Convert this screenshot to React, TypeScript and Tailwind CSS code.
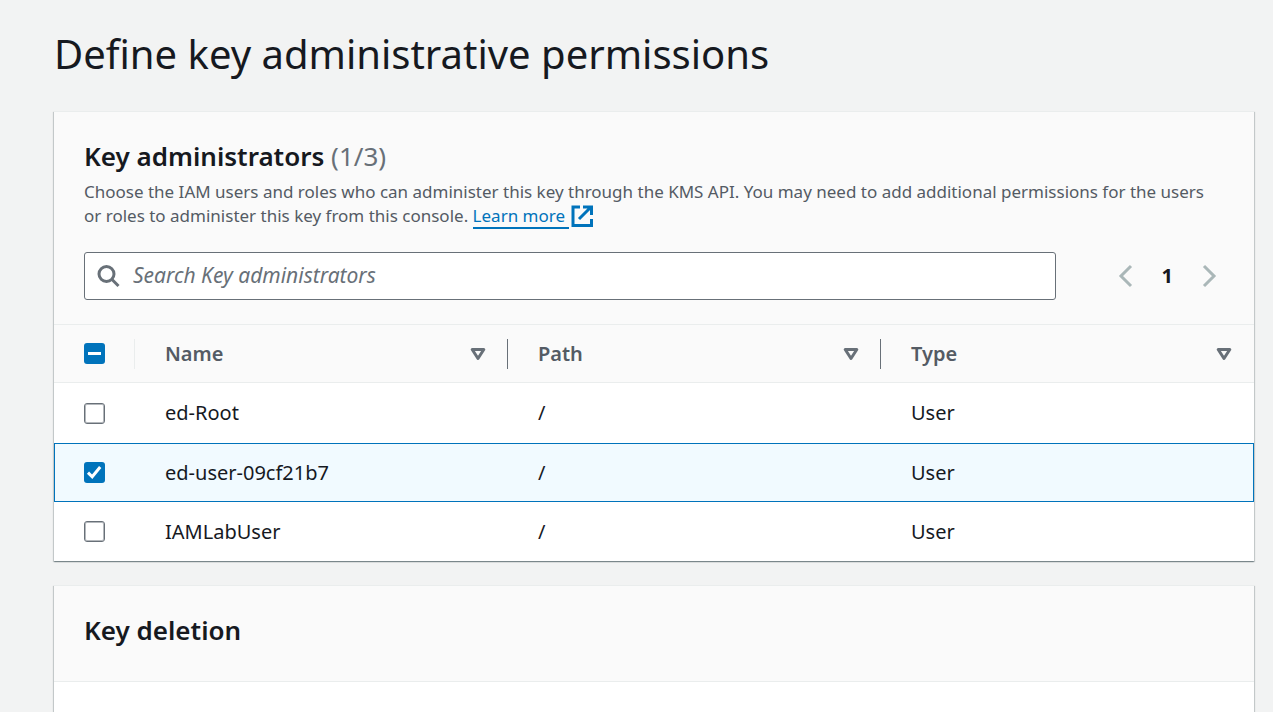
import { useState } from "react";

type Principal = { name: string; path: string; type: string };

const principals: Principal[] = [
  { name: "ed-Root", path: "/", type: "User" },
  { name: "ed-user-09cf21b7", path: "/", type: "User" },
  { name: "IAMLabUser", path: "/", type: "User" },
];

const columns = ["Name", "Path", "Type"];

const cardClass =
  "border-t border-[#eaeded] bg-white shadow-[0_1px_1px_0_rgba(0,28,36,0.3),1px_1px_1px_0_rgba(0,28,36,0.15),-1px_1px_1px_0_rgba(0,28,36,0.15)]";

function Tick({
  label,
  checked,
  partial = false,
  onChange,
}: {
  label: string;
  checked: boolean;
  partial?: boolean;
  onChange: () => void;
}) {
  const filled = checked || partial;
  return (
    <span className="grid size-[21px]">
      <input
        type="checkbox"
        aria-label={label}
        checked={checked}
        ref={(el) => {
          if (el) el.indeterminate = partial;
        }}
        onChange={onChange}
        className={
          filled
            ? "col-start-1 row-start-1 size-[21px] appearance-none rounded-[3px] bg-[#0073bb]"
            : "col-start-1 row-start-1 size-[21px] appearance-none rounded-[3px] border border-[#687078] bg-white inset-ring inset-ring-[#b4b8bc]"
        }
      />
      {filled && (
        <svg viewBox="0 0 21 21" className="pointer-events-none col-start-1 row-start-1 size-[21px]" fill="none" stroke="#fff" strokeWidth="3">
          {partial ? <path d="M4 10.5h13" /> : <path d="M4 10.6l4.2 4.2L16.2 5" />}
        </svg>
      )}
    </span>
  );
}

export default function App() {
  const [selected, setSelected] = useState<string[]>(["ed-user-09cf21b7"]);
  const [query, setQuery] = useState("");
  const all = selected.length === principals.length;
  const toggle = (name: string) =>
    setSelected((s) => (s.includes(name) ? s.filter((n) => n !== name) : [...s, name]));
  const rows = principals.filter((p) => p.name.toLowerCase().includes(query.toLowerCase()));

  return (
    <div className="h-screen overflow-hidden bg-[#f2f3f3] pr-[19px] pl-[54px] font-['Noto_Sans',sans-serif] text-[#16191f]">
      <h1 className="pt-6 pb-7 text-[40px] leading-[59px]">Define key administrative permissions</h1>

      <section className={cardClass}>
        <div className="border-b border-[#eaeded] bg-[#fafafa] px-[30px] pt-7 pb-6">
          <h2 className="text-[26px] leading-8 font-semibold">
            Key administrators <span className="font-normal text-[#687078]">(1/3)</span>
          </h2>
          <p className="mt-2 text-[17px] leading-6 text-[#545b64]">
            Choose the IAM users and roles who can administer this key through the KMS API. You may need to add additional permissions for the users
            or roles to administer this key from this console.{" "}
            <a href="#learn-more" className="whitespace-nowrap text-[#0073bb]">
              <span className="border-b-2 border-[#0073bb] pr-1">Learn more</span>
              <svg viewBox="0 0 22 22" className="ml-0.5 inline size-[22px] align-[-5px]" fill="none" stroke="currentColor" strokeWidth="3">
                <path d="M9 2H2v18.500h18.500V14M12 2h8.500v8M20 2L8 14" />
              </svg>
            </a>
          </p>
          <div className="mt-6 flex items-center justify-between">
            <label className="flex h-12 w-4/5 max-w-[972px] grow items-center rounded-[3px] border border-[#687078] bg-white px-3">
              <svg viewBox="0 0 24 24" className="size-6 shrink-0" fill="none" stroke="#687078" strokeWidth="3">
                <circle cx="9.500" cy="10" r="7.500" />
                <path d="M15 15.500l6.500 6.500" />
              </svg>
              <input
                type="text"
                aria-label="Search Key administrators"
                placeholder="Search Key administrators"
                value={query}
                onChange={(e) => setQuery(e.target.value)}
                className="ml-3 w-full bg-transparent text-[21px] outline-none placeholder:text-[#687078] placeholder:italic"
              />
            </label>
            <nav aria-label="Pagination" className="flex items-center gap-[29px] pr-1.5 pl-12">
              <button type="button" aria-label="Previous page" disabled>
                <svg viewBox="0 0 16 24" className="h-6 w-4" fill="none" stroke="#aab7b8" strokeWidth="3">
                  <path d="M14 2L4 12l10 10" />
                </svg>
              </button>
              <button type="button" className="text-[20px] leading-6 font-bold">1</button>
              <button type="button" aria-label="Next page" disabled>
                <svg viewBox="0 0 16 24" className="h-6 w-4" fill="none" stroke="#aab7b8" strokeWidth="3">
                  <path d="M2 2l10 10L2 22" />
                </svg>
              </button>
            </nav>
          </div>
        </div>

        <table className="w-full table-fixed border-separate border-spacing-0 text-left text-[20px] leading-7">
          <thead className="bg-[#fafafa]">
            <tr>
              <th className="h-[58px] w-[81px] border-b border-[#eaeded] p-0">
                <div className="flex h-[30px] items-center border-r border-[#eaeded] pl-[30px]">
                  <Tick
                    label="Select all"
                    checked={all}
                    partial={selected.length > 0 && !all}
                    onChange={() => setSelected(all ? [] : principals.map((p) => p.name))}
                  />
                </div>
              </th>
              {columns.map((c, i) => (
                <th key={c} className="h-[58px] border-b border-[#eaeded] p-0 font-semibold text-[#545b64]">
                  <div
                    className={
                      i < columns.length - 1
                        ? "flex h-[30px] items-center justify-between border-r border-[#687078] pr-[21px] pl-[30px]"
                        : "flex h-[30px] items-center justify-between pr-[22px] pl-[30px]"
                    }
                  >
                    {c}
                    <button type="button" aria-label={`Sort by ${c}`}>
                      <svg viewBox="0 0 16 14" className="h-3.5 w-4" fill="none" stroke="#687078" strokeWidth="3" strokeLinejoin="round">
                        <path d="M2.200 2.500h11.600L8 11.500z" />
                      </svg>
                    </button>
                  </div>
                </th>
              ))}
            </tr>
          </thead>
          <tbody>
            {rows.map((p) => {
              const on = selected.includes(p.name);
              const cell = on ? "border-y border-[#0073bb] bg-[#f1faff] p-0 pl-[30px]" : "p-0 pl-[30px]";
              return (
                <tr key={p.name} className="h-[59px] first:h-[60px]">
                  <td className={on ? "border-y border-l border-[#0073bb] bg-[#f1faff] p-0 pl-[29px]" : cell}>
                    <Tick label={`Select ${p.name}`} checked={on} onChange={() => toggle(p.name)} />
                  </td>
                  <td className={cell}>{p.name}</td>
                  <td className={cell}>{p.path}</td>
                  <td className={on ? "border-y border-r border-[#0073bb] bg-[#f1faff] p-0 pl-[30px]" : cell}>{p.type}</td>
                </tr>
              );
            })}
          </tbody>
        </table>
      </section>

      <section className={`mt-6 ${cardClass}`}>
        <div className="border-b border-[#eaeded] bg-[#fafafa] px-[30px] pt-7 pb-[35px]">
          <h2 className="text-[26px] leading-8 font-semibold">Key deletion</h2>
        </div>
        <div className="h-24" />
      </section>
    </div>
  );
}
